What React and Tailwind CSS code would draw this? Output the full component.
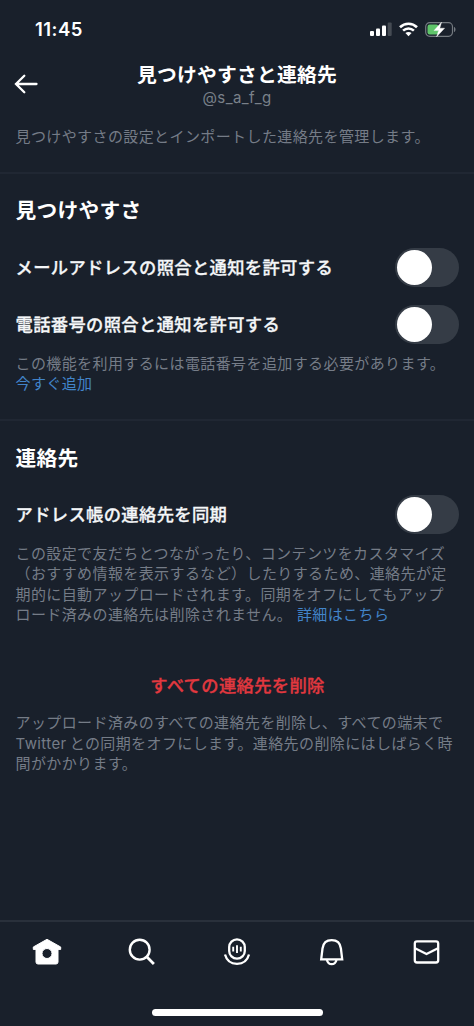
const JP = "font-['Inter','Noto_Sans_CJK_JP',sans-serif]";

function Toggle() {
  return (
    <button role="switch" aria-checked="false" className="flex h-[39px] w-[64px] shrink-0 items-center rounded-full bg-[#353c46] pl-[2px]">
      <span className="size-[34.5px] rounded-full bg-white" />
    </button>
  );
}

function Row({ label }) {
  return (
    <div className="flex h-[57px] items-center justify-between">
      <span className="-ml-[0.5px] whitespace-nowrap text-[17.3px] font-medium leading-[24px] tracking-[0.36px] text-[#f4f6f8] [-webkit-text-stroke:0.3px]">{label}</span>
      <Toggle />
    </div>
  );
}

function Line({ children }) {
  return <span className="block whitespace-nowrap">{children}</span>;
}

function Note({ children }) {
  return <p className="relative top-[0.6px] -ml-[0.5px] text-[15px] leading-[20.6px] tracking-[0.4px] text-[#757c87]">{children}</p>;
}

function StatusBar() {
  return (
    <div className="flex h-[58px] items-center justify-between pl-[35px] pr-[18px]">
      <span className="text-[18.5px] font-semibold leading-[24px] tracking-[0.45px]">11:45</span>
      <div className="flex items-center gap-[7px]">
        <svg width="22" height="16" viewBox="0 0 22 16" fill="#fff">
          <rect x="0" y="10" width="4" height="5" rx="1" />
          <rect x="6" y="7.5" width="4" height="7.5" rx="1" />
          <rect x="12" y="4.5" width="4" height="10.5" rx="1" />
          <rect x="17.7" y="1.5" width="4" height="13.5" rx="1" fill="#454b53" />
        </svg>
        <svg width="19" height="15" viewBox="0 0 19 15" fill="none" stroke="#fff" strokeWidth="2.6">
          <path d="M1 5.2C5.8.5 13.2.5 18 5.2" />
          <path d="M4.1 8.6c3.1-2.9 7.7-2.9 10.8 0" />
          <path d="M6.4 11.1c1.8-1.5 4.4-1.5 6.2 0L9.5 14.3Z" fill="#fff" stroke="none" />
        </svg>
        <svg width="31" height="17" viewBox="0 0 31 17">
          <rect x="0.7" y="1.7" width="26.8" height="13.6" rx="4" fill="none" stroke="#747a80" strokeWidth="1.2" />
          <rect x="2.5" y="3.5" width="11" height="10" rx="2.2" fill="#5fc46a" />
          <path d="M29 6v5c2-.6 2-4.4 0-5Z" fill="#747a80" />
          <path d="M16.5 1.2 9 9.600h4.600l-2 6.200 8-8.600h-4.800Z" fill="#fff" stroke="#fff" strokeWidth="0.4" />
        </svg>
      </div>
    </div>
  );
}

function TabBar() {
  return (
    <nav className="flex h-[106px] flex-col items-center border-t-2 border-[#29303b]">
      <div className="flex h-[59px] w-full items-center justify-around">
        <svg width="30" height="30" viewBox="0 0 30 30" fill="#fff">
          <path fillRule="evenodd" stroke="#fff" strokeWidth="1" strokeLinejoin="round" d="M15 2.3 1.300 10v2.400H4V25q0 2 2 2h18q2 0 2-2V12.400h2.700V10ZM15 11.500a5 5 0 1 0 0 10 5 5 0 0 0 0-10Z" />
        </svg>
        <svg width="30" height="30" viewBox="0 0 30 30" fill="none" stroke="#fff" strokeWidth="2.4">
          <circle cx="12.700" cy="12.700" r="9.900" />
          <path d="m19.700 19.700 7.200 7.200" strokeWidth="2.800" />
        </svg>
        <svg width="30" height="30" viewBox="0 0 30 30" fill="none" stroke="#fff" strokeWidth="2.3">
          <rect x="7.200" y="2.300" width="15.600" height="19.400" rx="7.800" />
          <path d="M3 17.500c1.600 6 6 9.300 12 9.300s10.400-3.300 12-9.300" />
          <path d="M11.200 9.800v4.600M15 8.300v7.600M18.800 9.800v4.600" strokeWidth="1.900" />
        </svg>
        <svg width="30" height="30" viewBox="0 0 30 30" fill="none" stroke="#fff" strokeWidth="2.3">
          <path d="M4.200 22.300 5.500 11.500C6.200 6 9.700 3.200 14.700 3.200s8.500 2.800 9.200 8.300l1.300 10.800Z" />
          <path d="M9.900 23c.8 3 2.500 4.200 4.800 4.200s4-1.200 4.800-4.200" />
        </svg>
        <svg width="30" height="30" viewBox="0 0 30 30" fill="none" stroke="#fff" strokeWidth="2.3">
          <rect x="2.800" y="4.300" width="23.400" height="21.200" rx="2.200" />
          <path d="m3 11.200 11.500 5.800L26 11.200" />
        </svg>
      </div>
      <div className="mt-[28px] h-[7px] w-[171px] rounded-full bg-white" />
    </nav>
  );
}

export default function App() {
  return (
    <div className={`${JP} flex h-[1026px] w-[474px] flex-col overflow-hidden bg-[#19202b] text-white`}>
      <StatusBar />
      <header className="grid h-[58px] grid-cols-[60px_1fr_60px]">
        <button aria-label="戻る" className="flex h-[51px] items-center pl-[14px]">
          <svg width="24" height="20" viewBox="0 0 24 20" fill="none" stroke="#fff" strokeWidth="2.3" strokeLinecap="round">
            <path d="M2 10h20.500M10.300 1.700 2 10l8.300 8.300" />
          </svg>
        </button>
        <div className="flex flex-col items-center pt-[4px]">
          <h1 className="whitespace-nowrap text-[19.8px] font-bold leading-[26px] tracking-[0.2px]">見つけやすさと連絡先</h1>
          <span className="text-[15px] leading-[19px] tracking-[0.4px] text-[#7a818a]">@s_a_f_g</span>
        </div>
      </header>
      <main className="flex-1">
        <section className="h-[58px] border-b-2 border-[#202733] pl-[16px] pt-[10px]">
          <Note><Line>見つけやすさの設定とインポートした連絡先を管理します。</Line></Note>
        </section>
        <section className="h-[247px] border-b-2 border-[#202733] pl-[16px] pr-[15px] pt-[22px]">
          <h2 className="-ml-[0.5px] mb-[13px] text-[20.7px] font-bold leading-[30px] tracking-[0.3px]">見つけやすさ</h2>
          <Row label="メールアドレスの照合と通知を許可する" />
          <Row label="電話番号の照合と通知を許可する" />
          <Note>
            <Line>この機能を利用するには電話番号を追加する必要があります。</Line>
            <a className="text-[#4284c9]">今すぐ追加</a>
          </Note>
        </section>
        <section className="pl-[16px] pr-[15px] pt-[23px]">
          <h2 className="-ml-[0.5px] mb-[12px] text-[20.7px] font-bold leading-[30px] tracking-[0.3px]">連絡先</h2>
          <Row label="アドレス帳の連絡先を同期" />
          <Note>
            <Line>この設定で友だちとつながったり、コンテンツをカスタマイズ</Line>
            <Line>（おすすめ情報を表示するなど）したりするため、連絡先が定</Line>
            <Line>期的に自動アップロードされます。同期をオフにしてもアップ</Line>
            <Line>ロード済みの連絡先は削除されません。 <a className="text-[#4284c9]">詳細はこちら</a></Line>
          </Note>
          <button className="mt-[47px] mb-[12px] block h-[28px] w-full text-center text-[17.3px] font-medium leading-[28px] tracking-[0.36px] text-[#e2383f] [-webkit-text-stroke:0.3px]">すべての連絡先を削除</button>
          <Note>
            <Line>アップロード済みのすべての連絡先を削除し、すべての端末で</Line>
            <Line><span className="mr-[3px]">Twitter</span>との同期をオフにします。連絡先の削除にはしばらく時</Line>
            <Line>間がかかります。</Line>
          </Note>
        </section>
      </main>
      <TabBar />
    </div>
  );
}
